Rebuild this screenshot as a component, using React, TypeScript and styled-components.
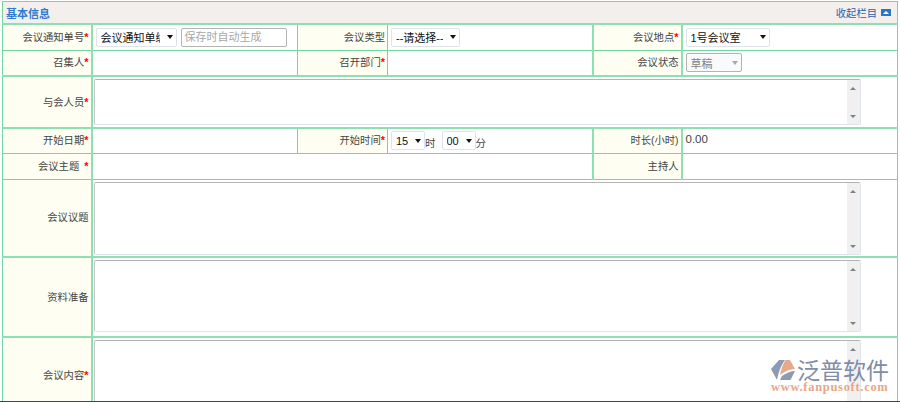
import styled, { createGlobalStyle } from "styled-components";

const GlobalStyle = createGlobalStyle`
  html, body {
    margin: 0;
    padding: 0;
    background: #fff;
    width: 900px;
    height: 402px;
    overflow: hidden;
    font-family: "Liberation Sans", "Noto Sans CJK SC", sans-serif;
    font-size: 11px;
    color: #333;
  }
`;

function Required({ gap }: { gap?: boolean }) {
  return <Star $gap={gap}>*</Star>;
}

function FakeSelect({
  width,
  text,
  disabled,
}: {
  width: number;
  text: string;
  disabled?: boolean;
}) {
  return (
    <SelectBox $width={width} $disabled={disabled}>
      <SelectText>{text}</SelectText>
      <Caret $disabled={disabled} />
    </SelectBox>
  );
}

function ScrollArea({ height }: { height: number }) {
  return (
    <AreaBox $height={height}>
      <ScrollBar>
        <ArrowUp />
        <ArrowDown />
      </ScrollBar>
    </AreaBox>
  );
}

function App() {
  return (
    <Page>
      <GlobalStyle />
      <Panel>
        <HeaderBar>
          <Title>基本信息</Title>
          <Collapse>
            收起栏目
            <CollapseIcon />
          </Collapse>
        </HeaderBar>
        <Table>
          <colgroup>
            <col style={{ width: 89 }} />
            <col style={{ width: 206 }} />
            <col style={{ width: 90 }} />
            <col style={{ width: 205 }} />
            <col style={{ width: 89 }} />
            <col />
          </colgroup>
          <tbody>
            <Row $height={26} $thickTop>
              <Label>
                会议通知单号
                <Required />
              </Label>
              <Field>
                <Inline>
                  <FakeSelect width={81} text="会议通知单编号" />
                  <CodeInput>保存时自动生成</CodeInput>
                </Inline>
              </Field>
              <Label>会议类型</Label>
              <Field>
                <FakeSelect width={69} text="--请选择--" />
              </Field>
              <Label>
                会议地点
                <Required />
              </Label>
              <Field>
                <FakeSelect width={84} text="1号会议室" />
              </Field>
            </Row>
            <Row $height={26}>
              <Label>
                召集人
                <Required />
              </Label>
              <Field />
              <Label>
                召开部门
                <Required />
              </Label>
              <Field />
              <Label>会议状态</Label>
              <Field>
                <FakeSelect width={56} text="草稿" disabled />
              </Field>
            </Row>
            <Row $height={52} $thickTop>
              <Label>
                与会人员
                <Required />
              </Label>
              <AreaField colSpan={5}>
                <ScrollArea height={46} />
              </AreaField>
            </Row>
            <Row $height={25} $thickTop>
              <Label>
                开始日期
                <Required />
              </Label>
              <Field />
              <Label>
                开始时间
                <Required />
              </Label>
              <Field>
                <Inline $gap={0}>
                  <FakeSelect width={34} text="15" />
                  <Unit>时</Unit>
                  <TimeSpacer />
                  <FakeSelect width={34} text="00" />
                  <Unit>分</Unit>
                </Inline>
              </Field>
              <Label>时长(小时)</Label>
              <Field>
                <Duration>0.00</Duration>
              </Field>
            </Row>
            <Row $height={26}>
              <Label>
                会议主题
                <Required gap />
              </Label>
              <Field colSpan={3} />
              <Label>主持人</Label>
              <Field />
            </Row>
            <Row $height={78}>
              <Label>会议议题</Label>
              <AreaField colSpan={5}>
                <ScrollArea height={73} />
              </AreaField>
            </Row>
            <Row $height={80} $thickTop>
              <Label>资料准备</Label>
              <AreaField colSpan={5}>
                <ScrollArea height={72} />
              </AreaField>
            </Row>
            <Row $height={64} $thickTop>
              <Label>
                会议内容
                <Required />
              </Label>
              <AreaField colSpan={5}>
                <ScrollArea height={73} />
              </AreaField>
            </Row>
          </tbody>
        </Table>
      </Panel>
      <Watermark>
        <LogoLine>
          <svg width="25" height="22" viewBox="0 0 25 22">
            <path d="M8 1 H14 C11 5 8 11 6 21 L0 10 Z" fill="#8c9ab3" />
            <path d="M14.5 1 H19 L24 10 C19 10 14 12 9 16 C10 10 12 5 14.5 1 Z" fill="#e6a98a" />
            <path d="M9 21 L11 17 C15 14 20 12 24 12 L19.5 21 Z" fill="#8c9ab3" />
          </svg>
          <LogoName>泛普软件</LogoName>
        </LogoLine>
        <LogoSite>www.fanpusoft.com</LogoSite>
      </Watermark>
    </Page>
  );
}

export default App;

const Page = styled.div`
  position: relative;
  width: 900px;
  height: 402px;
  overflow: hidden;
  box-sizing: border-box;
  padding: 1px 2px 0 2px;
  border-bottom: 1px solid #3c4a4a;
`;
const Panel = styled.div`
  width: 896px;
  height: 400px;
  overflow: hidden;
`;
const HeaderBar = styled.div`
  height: 22px;
  box-sizing: border-box;
  border: 1px solid #72d7a0;
  border-bottom: 0;
  background: #f2efec;
  display: flex;
  align-items: center;
  justify-content: space-between;
  padding: 0 6px 0 3px;
`;
const Title = styled.span`
  color: #2f7bd0;
  font-size: 11px;
  font-weight: bold;
`;
const Collapse = styled.span`
  display: flex;
  align-items: center;
  gap: 4px;
  color: #2a62b0;
  font-size: 10.3px;
`;
const CollapseIcon = styled.span`
  position: relative;
  display: block;
  width: 10px;
  height: 7px;
  background: #2a78c4;
  &::after {
    content: "";
    position: absolute;
    left: 2px;
    top: 2px;
    border: 3px solid transparent;
    border-top: 0;
    border-bottom: 3px solid #fff;
  }
`;
const Table = styled.table`
  width: 896px;
  table-layout: fixed;
  border-collapse: collapse;
  border: 1px solid #72d7a0;

  td:first-child,
  td:nth-last-child(2),
  td:nth-last-child(3) {
    border-right: 2px solid #8ee0b3;
  }
`;
const Row = styled.tr<{ $height: number; $thickTop?: boolean }>`
  height: ${(p) => p.$height}px;

  td {
    ${(p) => (p.$thickTop ? "border-top: 2px solid #8ee0b3;" : "")}
  }
`;
const Label = styled.td`
  box-sizing: border-box;
  border: 1px solid #72d7a0;
  background: #fefff2;
  color: #444;
  text-align: right;
  vertical-align: middle;
  padding: 0 2px 2px 0;
  font-size: 10.3px;
  white-space: nowrap;
`;
const Field = styled.td`
  box-sizing: border-box;
  border: 1px solid #72d7a0;
  background: #fff;
  vertical-align: middle;
  padding: 0 3px;
`;
const AreaField = styled(Field)`
  vertical-align: top;
  padding: 2px 1px 0 1px;
  overflow: hidden;
`;
const Star = styled.span<{ $gap?: boolean }>`
  color: #f00;
  font-size: 11px;
  font-weight: bold;
  margin-left: ${(p) => (p.$gap ? "5px" : "0")};
`;
const Inline = styled.div<{ $gap?: number }>`
  display: flex;
  align-items: center;
  gap: ${(p) => p.$gap ?? 4}px;
`;
const SelectBox = styled.div<{ $width: number; $disabled?: boolean }>`
  box-sizing: border-box;
  width: ${(p) => p.$width}px;
  height: 19px;
  flex: none;
  display: flex;
  align-items: center;
  padding: 0 3px 0 4px;
  background: ${(p) => (p.$disabled ? "#fafafa" : "#fff")};
  border: 1px solid ${(p) => (p.$disabled ? "#b4b4b4" : "#dfe3ea")};
  border-radius: 2px;
  color: ${(p) => (p.$disabled ? "#808080" : "#111")};
  font-size: 11px;
  overflow: hidden;
`;
const SelectText = styled.span`
  flex: 1;
  min-width: 0;
  white-space: nowrap;
  overflow: hidden;
`;
const Caret = styled.i<{ $disabled?: boolean }>`
  flex: none;
  margin-left: 7px;
  border: 3.5px solid transparent;
  border-bottom: 0;
  border-top: 4px solid ${(p) => (p.$disabled ? "#a8a8a8" : "#111")};
`;
const CodeInput = styled.div`
  box-sizing: border-box;
  width: 106px;
  height: 19px;
  border: 1px solid #b4b4b4;
  border-radius: 2px;
  padding: 0 3px;
  color: #a8a8a8;
  font-size: 11px;
  line-height: 16px;
  white-space: nowrap;
  overflow: hidden;
`;
const Unit = styled.span`
  font-size: 10.5px;
  color: #444;
  padding-top: 4px;
`;
const TimeSpacer = styled.span`
  width: 6px;
`;
const Duration = styled.span`
  color: #444;
  font-size: 11.5px;
  position: relative;
  top: -2px;
`;
const AreaBox = styled.div<{ $height: number }>`
  box-sizing: border-box;
  position: relative;
  width: 767px;
  height: ${(p) => p.$height}px;
  background: #fff;
  border: 1px solid #dfe3ea;
  border-top: 1px solid #b4b4b4;
  border-left-color: #c8c8cc;
  border-radius: 2px;
`;
const ScrollBar = styled.div`
  position: absolute;
  top: 0;
  right: 0;
  bottom: 0;
  width: 13px;
  background: #f0f0f0;
`;
const ArrowUp = styled.i`
  position: absolute;
  top: 7px;
  left: 3px;
  border: 3px solid transparent;
  border-top: 0;
  border-bottom: 3px solid #808080;
`;
const ArrowDown = styled.i`
  position: absolute;
  bottom: 6px;
  left: 3px;
  border: 3px solid transparent;
  border-bottom: 0;
  border-top: 3px solid #808080;
`;
const Watermark = styled.div`
  position: absolute;
  left: 771px;
  top: 358px;
  width: 124px;
  pointer-events: none;
`;
const LogoLine = styled.div`
  display: flex;
  align-items: center;
  gap: 1px;
  height: 23px;
`;
const LogoName = styled.span`
  font-family: "Noto Sans CJK SC", sans-serif;
  font-size: 23px;
  line-height: 23px;
  white-space: nowrap;
  color: #7f8da8;
`;
const LogoSite = styled.div`
  font-family: "Liberation Serif", serif;
  font-size: 12.5px;
  font-weight: bold;
  line-height: 13px;
  letter-spacing: 0.7px;
  color: #e8a688;
  white-space: nowrap;
`;
